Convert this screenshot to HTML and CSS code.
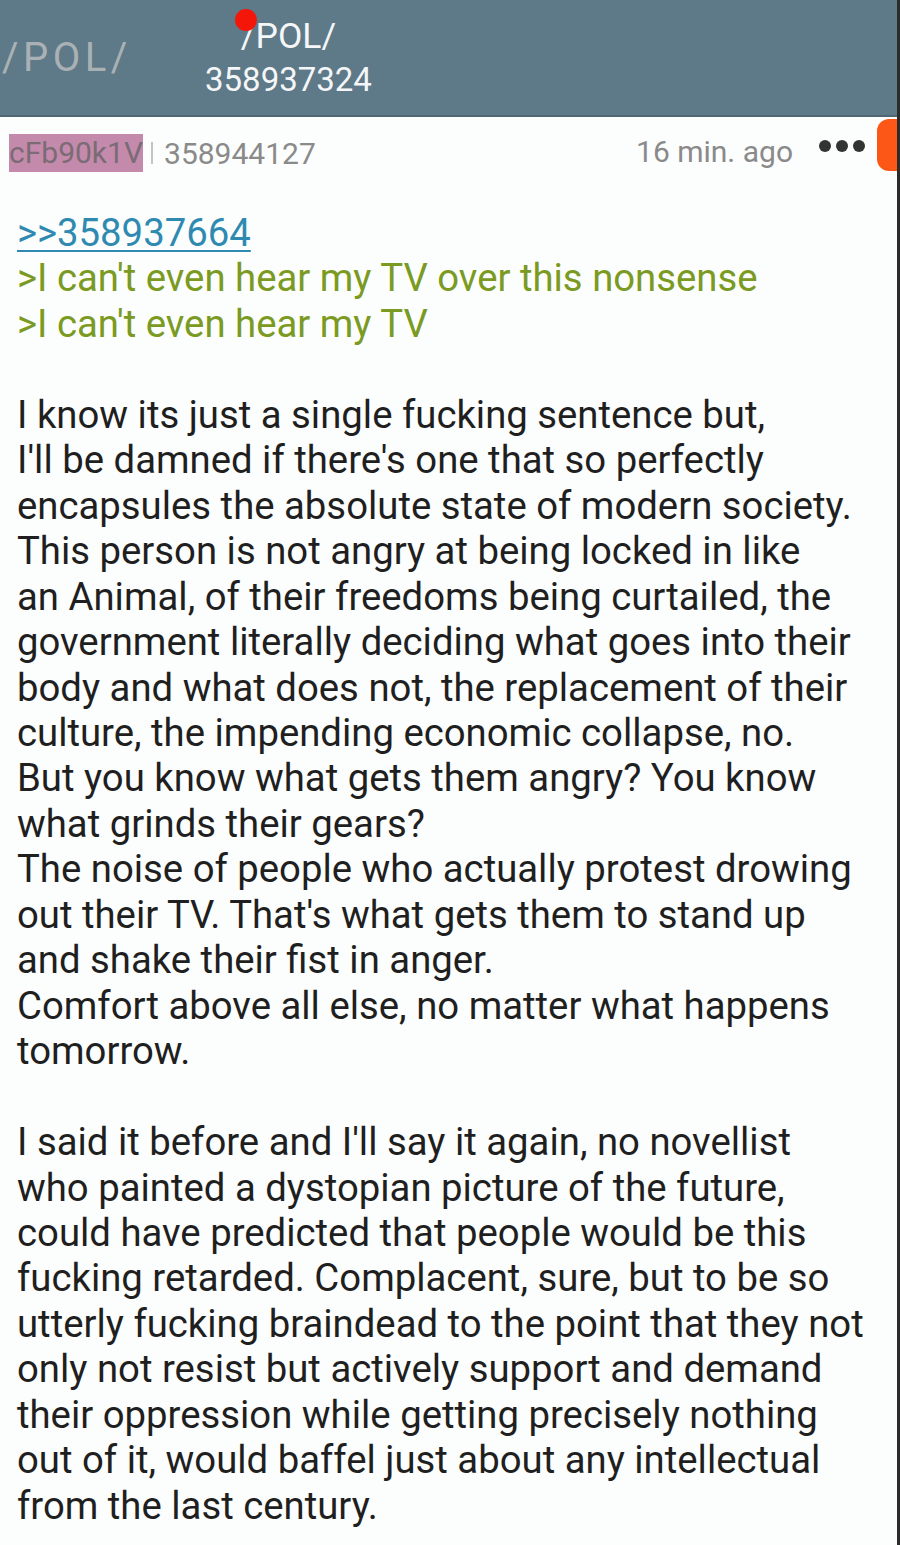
FILE: index.html
```html
<!DOCTYPE html>
<html lang="en">
<head>
  <meta charset="UTF-8">
  <title>/pol/ - 358937324</title>
  <link rel="stylesheet" href="styles.css">
</head>
<body>
  <div class="app">
    <header class="toolbar">
      <div class="board-tag">/POL/</div>
      <div class="thread-title">
        <span class="unread-dot"></span>
        <div class="thread-board">/POL/</div>
        <div class="thread-no">358937324</div>
      </div>
    </header>

    <div class="post">
      <div class="post-head">
        <span class="poster-id">cFb90k1V</span>
        <span class="sep"></span>
        <span class="post-no">358944127</span>
        <span class="post-time">16 min. ago</span>
        <button class="more-btn" aria-label="More">
          <span></span><span></span><span></span>
        </button>
        <span class="scroll-tab"></span>
      </div>

      <div class="post-body">
        <a class="quote-link" href="#p358937664">&gt;&gt;358937664</a><br>
        <span class="greentext">&gt;I can't even hear my TV over this nonsense</span><br>
        <span class="greentext">&gt;I can't even hear my TV</span><br>
        <br>
        I know its just a single fucking sentence but,<br>
        I'll be damned if there's one that so perfectly<br>
        encapsules the absolute state of modern society.<br>
        This person is not angry at being locked in like<br>
        an Animal, of their freedoms being curtailed, the<br>
        government literally deciding what goes into their<br>
        body and what does not, the replacement of their<br>
        culture, the impending economic collapse, no.<br>
        But you know what gets them angry? You know<br>
        what grinds their gears?<br>
        The noise of people who actually protest drowing<br>
        out their TV. That's what gets them to stand up<br>
        and shake their fist in anger.<br>
        Comfort above all else, no matter what happens<br>
        tomorrow.<br>
        <br>
        I said it before and I'll say it again, no novellist<br>
        who painted a dystopian picture of the future,<br>
        could have predicted that people would be this<br>
        fucking retarded. Complacent, sure, but to be so<br>
        utterly fucking braindead to the point that they not<br>
        only not resist but actively support and demand<br>
        their oppression while getting precisely nothing<br>
        out of it, would baffel just about any intellectual<br>
        from the last century.
      </div>
    </div>
  </div>
</body>
</html>
```

FILE: styles.css
```css
body {
  margin: 0;
  background: #fcfdfd;
  font-family: Roboto, "Noto Sans", sans-serif;
}

.app {
  min-height: 1545px;
  border-right: 3px solid #2b2b2b;
  box-sizing: border-box;
}

.toolbar {
  height: 117px;
  background: #5e7987;
  border-bottom: 2px solid #4f6773;
  box-sizing: border-box;
  display: flex;
  align-items: center;
}

.board-tag {
  width: 205px;
  padding-left: 2px;
  font-size: 40px;
  letter-spacing: 4.5px;
  color: #a9b1b4;
  box-sizing: border-box;
}

.thread-title {
  position: relative;
  display: flex;
  flex-direction: column;
  align-items: center;
  color: #f4f6f7;
}

.thread-board {
  font-size: 35.5px;
  line-height: 44px;
}

.thread-no {
  font-size: 33px;
  line-height: 44px;
}

.unread-dot {
  position: absolute;
  top: -5px;
  left: 30px;
  width: 22px;
  height: 22px;
  border-radius: 50%;
  background: #f5160a;
}

.post-head {
  position: relative;
  display: flex;
  align-items: center;
  height: 72px;
  padding: 0 0 0 9px;
  color: #8a8a8a;
  font-size: 30px;
}

.poster-id {
  background: #c48aac;
  color: #7a6b74;
  padding: 1px 0;
  line-height: 36px;
}

.sep {
  width: 2px;
  height: 22px;
  background: #c4c4c4;
  margin: 0 11px 0 8px;
}

.post-time {
  margin-left: auto;
  padding-bottom: 4px;
}

.more-btn {
  display: flex;
  gap: 5px;
  border: none;
  background: none;
  padding: 0;
  margin: 0 32px 14px 26px;
}

.more-btn span {
  width: 12px;
  height: 12px;
  border-radius: 50%;
  background: #333;
}

.scroll-tab {
  position: absolute;
  right: 0;
  top: 2px;
  width: 20px;
  height: 52px;
  background: #fc5716;
  border-radius: 12px 0 0 12px;
}

.post-body {
  padding: 21px 17px 0 17px;
  font-size: 38.3px;
  line-height: 45.46px;
  color: #1f1f1f;
  white-space: nowrap;
}

.quote-link {
  color: #2f8ab1;
  text-decoration: underline;
  text-underline-offset: 4px;
  text-decoration-thickness: 2px;
}

.greentext {
  color: #7a9a22;
}
```
